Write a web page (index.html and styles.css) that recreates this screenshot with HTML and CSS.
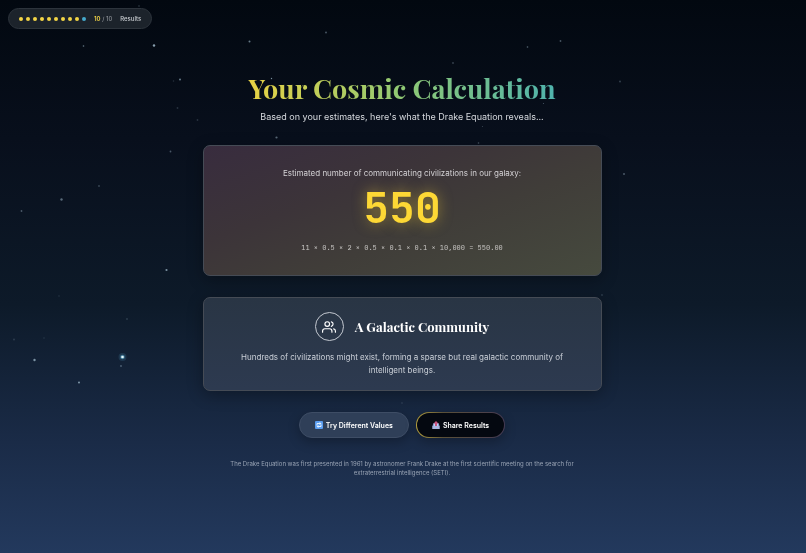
FILE: index.html
```html
<!DOCTYPE html>
<html lang="en">

<head>
    <meta charset="UTF-8">
    <meta name="viewport" content="width=device-width, initial-scale=1.0">
    <title>Your Cosmic Calculation</title>
    <link rel="stylesheet" href="styles.css">
</head>

<body>
    <svg class="stars" viewBox="0 0 806 553" preserveAspectRatio="xMidYMid slice" aria-hidden="true">
        <circle cx="122.500" cy="357" r="4" fill="#5fb8dd" opacity="0.15" />
        <circle cx="122.500" cy="357" r="2.300" fill="#5fb8dd" opacity="0.5" />
        <circle cx="122.500" cy="357" r="1.300" fill="#e8faff" />
        <g fill="#a9c4d4">
            <circle cx="154" cy="45.500" r="1.200" opacity="0.8" />
            <circle cx="83.500" cy="46" r="0.800" opacity="0.6" />
            <circle cx="249.500" cy="41.500" r="1" opacity="0.6" />
            <circle cx="326" cy="32.500" r="1" opacity="0.4" />
            <circle cx="180" cy="79.500" r="1" opacity="0.6" />
            <circle cx="271.500" cy="78.500" r="0.700" opacity="0.7" />
            <circle cx="276.500" cy="137.500" r="1.100" opacity="0.5" />
            <circle cx="170.500" cy="151.500" r="0.900" opacity="0.4" />
            <circle cx="61.500" cy="199.500" r="1.200" opacity="0.5" />
            <circle cx="21.500" cy="211" r="0.900" opacity="0.4" />
            <circle cx="99" cy="186" r="0.900" opacity="0.3" />
            <circle cx="166.500" cy="270" r="1.100" opacity="0.7" />
            <circle cx="34.500" cy="360" r="1.200" opacity="0.7" />
            <circle cx="79" cy="382.500" r="0.900" opacity="0.8" />
            <circle cx="121" cy="366" r="0.900" opacity="0.4" />
            <circle cx="560.500" cy="41" r="0.900" opacity="0.4" />
            <circle cx="527.500" cy="47" r="0.800" opacity="0.5" />
            <circle cx="620" cy="81.500" r="0.900" opacity="0.3" />
            <circle cx="624" cy="174" r="1" opacity="0.4" />
            <circle cx="453" cy="63" r="0.900" opacity="0.3" />
            <circle cx="478.500" cy="143" r="0.800" opacity="0.4" />
            <circle cx="543.500" cy="103.500" r="0.600" opacity="0.4" />
            <circle cx="482.500" cy="126.500" r="0.600" opacity="0.3" />
            <circle cx="173.500" cy="81" r="0.800" opacity="0.2" />
            <circle cx="177.500" cy="108" r="0.900" opacity="0.2" />
            <circle cx="197.500" cy="120" r="0.900" opacity="0.2" />
            <circle cx="139" cy="6" r="0.800" opacity="0.3" />
            <circle cx="127" cy="319" r="0.900" opacity="0.2" />
            <circle cx="14" cy="339.500" r="0.900" opacity="0.2" />
            <circle cx="44" cy="338" r="0.900" opacity="0.1" />
            <circle cx="59" cy="296" r="0.900" opacity="0.1" />
            <circle cx="602" cy="295" r="0.900" opacity="0.2" />
            <circle cx="402" cy="403" r="0.800" opacity="0.2" />
        </g>
    </svg>

    <div class="progress">
        <div class="dots">
            <span class="dot"></span>
            <span class="dot"></span>
            <span class="dot"></span>
            <span class="dot"></span>
            <span class="dot"></span>
            <span class="dot"></span>
            <span class="dot"></span>
            <span class="dot"></span>
            <span class="dot"></span>
            <span class="dot current"></span>
        </div>
        <span class="count"><b>10</b> / 10</span>
        <span class="step-name">Results</span>
    </div>

    <main class="results">
        <header class="heading">
            <h1>Your Cosmic Calculation</h1>
            <p>Based on your estimates, here's what the Drake Equation reveals...</p>
        </header>

        <section class="card result-card">
            <p class="label">Estimated number of communicating civilizations in our galaxy:</p>
            <div class="number">550</div>
            <p class="equation">11 × 0.5 × 2 × 0.5 × 0.1 × 0.1 × 10,000 = 550.00</p>
        </section>

        <section class="card meaning-card">
            <div class="meaning-title">
                <span class="icon-circle">
                    <svg viewBox="0 0 24 24" width="14" height="14" fill="none" stroke="#fff" stroke-width="2" stroke-linecap="round" stroke-linejoin="round" aria-hidden="true">
                        <path d="M17 21v-2a4 4 0 0 0-4-4H5a4 4 0 0 0-4 4v2" />
                        <circle cx="9" cy="7" r="4" />
                        <path d="M23 21v-2a4 4 0 0 0-3-3.870" />
                        <path d="M16 3.130a4 4 0 0 1 0 7.750" />
                    </svg>
                </span>
                <h2>A Galactic Community</h2>
            </div>
            <p class="meaning">Hundreds of civilizations might exist, forming a sparse but real galactic community of intelligent beings.</p>
        </section>

        <div class="actions">
            <button type="button" class="btn">
                <svg viewBox="0 0 16 16" width="8" height="8" aria-hidden="true">
                    <rect width="16" height="16" rx="2" fill="#5a9df0" />
                    <path d="M4 9V5h6M12 7v4H6" fill="none" stroke="#e4f0ff" stroke-width="2" />
                    <path d="M9 2l4 3-4 3zM7 8l-4 3 4 3z" fill="#e4f0ff" />
                </svg>
                Try Different Values
            </button>
            <button type="button" class="btn btn-share">
                <svg viewBox="0 0 16 16" width="8" height="8" aria-hidden="true">
                    <path d="M3 4h10l2 6v6H1v-6z" fill="#8fa3d6" />
                    <path d="M4 5h8v6H4z" fill="#b9d3f5" />
                    <path d="M1 10h4l1 2h4l1-2h4v6H1z" fill="#a9b6e0" />
                    <path d="M8 0l5 5h-3v5H6V5H3z" fill="#c9527e" />
                </svg>
                Share Results
            </button>
        </div>

        <footer class="note">The Drake Equation was first presented in 1961 by astronomer Frank Drake at the first scientific meeting on the search for extraterrestrial intelligence (SETI).</footer>
    </main>
</body>

</html>
```
FILE: styles.css
```css
* {
    box-sizing: border-box;
    margin: 0;
    padding: 0;
}

body {
    min-height: 100vh;
    padding: 8px 10px 8px 8px;
    font-family: Inter, sans-serif;
    color: #fff;
    background: linear-gradient(180deg, #020810 0%, #080f1c 25%, #0d1a29 55%, #1a2b47 80%, #23395d 100%) no-repeat #23395d;
}

.stars {
    position: fixed;
    top: 0;
    left: 0;
    width: 100%;
    height: 100%;
    z-index: -1;
}

/* progress pill */
.progress {
    display: flex;
    align-items: center;
    gap: 8px;
    width: fit-content;
    height: 21px;
    padding: 0 10px;
    font-size: 6px;
    background: #1c232b;
    border: 1px solid #2d343c;
    border-radius: 11px;
}

.dots {
    display: flex;
    gap: 3px;
}

.dot {
    width: 4px;
    height: 4px;
    border-radius: 50%;
    background: #f3d546;
}

.dot.current {
    background: #45a9cc;
}

.count {
    color: #9a9fa5;
}

.count b {
    font-weight: 600;
    color: #f3d546;
}

.step-name {
    font-weight: 500;
    color: #c8ccd0;
}

.results {
    max-width: 399px;
    margin: 43px auto 0;
    text-align: center;
}

.heading {
    margin-bottom: 21px;
}

h1, h2 {
    font-family: "Playfair Display", "Liberation Serif", serif;
    font-weight: 700;
}

h1 {
    width: fit-content;
    margin: 0 auto 6px;
    font-size: 27px;
    line-height: 32px;
    color: transparent;
    background: linear-gradient(90deg, #e8d244, #8fc974 50%, #4fb3ad);
    -webkit-background-clip: text;
    background-clip: text;
}

.heading p {
    font-size: 9px;
    line-height: 14px;
    color: #d6d9de;
}

.card {
    border: 1px solid #454b55;
    border-radius: 7px;
    box-shadow: 0 4px 16px rgba(0, 0, 0, 0.3);
}

.result-card {
    margin-bottom: 21px;
    padding: 21px;
    background: linear-gradient(160deg, #382c3e 0%, #3c3439 35%, #403d39 60%, #464a3e 100%);
}

.label {
    font-size: 8px;
    line-height: 13px;
    color: #d4d2d5;
}

.number {
    font-family: "JetBrains Mono", "DejaVu Sans Mono", monospace;
    font-weight: 700;
    font-size: 43px;
    line-height: 56px;
    color: #fdd835;
    text-shadow: 0 0 14px rgba(253, 216, 53, 0.5);
}

.equation {
    margin-top: 6px;
    font-family: "JetBrains Mono", "DejaVu Sans Mono", monospace;
    font-size: 7px;
    line-height: 12px;
    color: #c9c7c5;
}

.meaning-card {
    padding: 14px 28px 13px;
    background: linear-gradient(180deg, #293544, #2d3a50);
}

.meaning-title {
    display: flex;
    justify-content: center;
    align-items: center;
    gap: 11px;
    margin-bottom: 10px;
}

.icon-circle {
    display: flex;
    justify-content: center;
    align-items: center;
    width: 29px;
    height: 29px;
    border: 1px solid #c3c8d0;
    border-radius: 50%;
}

h2 {
    font-size: 13px;
    line-height: 18px;
}

.meaning {
    font-size: 8px;
    line-height: 13px;
    color: #cbd0d8;
}

.actions {
    display: flex;
    justify-content: center;
    gap: 7px;
    margin: 21px 0;
}

.btn {
    display: flex;
    align-items: center;
    gap: 3px;
    height: 26px;
    padding: 0 15px;
    font-family: inherit;
    font-size: 7px;
    font-weight: 600;
    color: #fff;
    background: #2f3f58;
    border: 1px solid #3e4d65;
    border-radius: 13px;
    box-shadow: 0 4px 12px rgba(0, 0, 0, 0.25);
    cursor: pointer;
}

.btn-share {
    background: linear-gradient(#040810, #040810) padding-box, linear-gradient(90deg, #b7a13c, #5a5038 30%, #453a52) border-box;
    border-color: transparent;
}

.note {
    padding: 0 14px;
    font-size: 6px;
    line-height: 9px;
    color: #98a3b4;
}
```
